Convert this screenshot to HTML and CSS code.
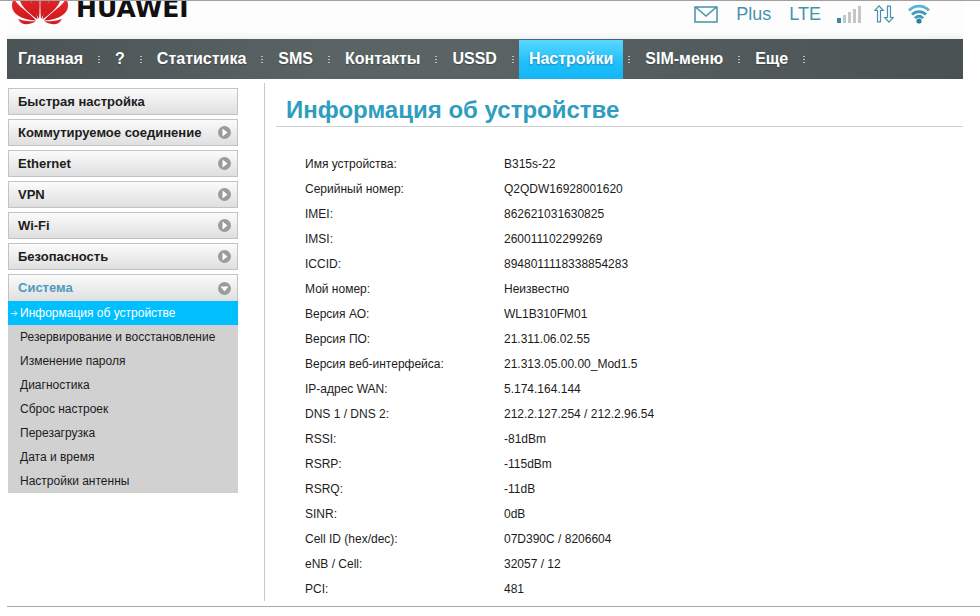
FILE: index.html
```html
<!DOCTYPE html>
<html lang="ru">
<head>
<meta charset="utf-8">
<title>Информация об устройстве</title>
<link rel="stylesheet" href="styles.css">
</head>
<body>
<div class="page">
  <header class="header">
    <a class="brand" href="#">
      <svg class="brand-mark" width="56" height="24" viewBox="0 0 56 24" aria-hidden="true">
        <defs>
          <linearGradient id="petal" x1="0" y1="0" x2="0" y2="1">
            <stop offset="0" stop-color="#ee2a2a"/><stop offset="1" stop-color="#c9181e"/>
          </linearGradient>
        </defs>
        <g id="half" fill="url(#petal)">
          <path d="M27 18C23 11 18 3 19-5c1-5 5-8 7-8 2 9 2 20 1 31z"/>
          <path d="M25.500 18.500C18 13 9 6 7.500-2L13-10C18-2 25 10 25.500 18.500z"/>
          <path d="M24 19.500C13 19 3 15 .5 8c-1-4-.5-7 1.500-10.500C5 5 17 11 24 19.500z"/>
          <path d="M24 20.500C19 23 15 23.500 12 23c-3-.5-5-3-6-5 6 1.800 12 2.500 18 2.500z"/>
        </g>
        <use href="#half" transform="matrix(-1 0 0 1 56 0)"/>
      </svg>
      <span class="brand-name">HUAWEI</span>
    </a>
    <div class="status">
      <svg class="icon-mail" width="24" height="17" viewBox="0 0 24 17" fill="none" stroke="#4593ac" stroke-width="1.500" aria-hidden="true">
        <path d="M1 1h22v15H1zM2 1.500l10 8.500L22 1.500"/>
      </svg>
      <span class="operator">Plus</span>
      <span class="network">LTE</span>
      <svg class="icon-signal" width="25" height="18" viewBox="0 0 25 18" aria-hidden="true">
        <path fill="#3f87a3" d="M0 13h4v5H0z"/>
        <path fill="#b5cbd4" d="M6 10h3v8H6z"/>
        <path fill="#c6c6c6" d="M11 7h3v11h-3zM16 4h3v14h-3zM21 1h3v17h-3z"/>
      </svg>
      <svg class="icon-traffic" width="20" height="18" viewBox="0 0 20 18" fill="none" stroke="#4593ac" stroke-width="1.200" aria-hidden="true">
        <path d="M5 .8L.8 5.500h2.700v11.300h3V5.500h2.700zM15 17.200l4.200-4.700h-2.700V1.200h-3v11.300h-2.700z"/>
      </svg>
      <svg class="icon-wifi" width="22" height="20" viewBox="0 0 22 20" fill="none" stroke="#3f9abd" stroke-width="2.800" aria-hidden="true">
        <path stroke="#57b4d4" d="M1 6.500C6.500.6 15.500.6 21 6.500"/>
        <path d="M4 10.600c4-4 10-4 14 0M7 14.200c2.500-2.400 5.500-2.400 8 0"/>
        <circle cx="11" cy="17" r="2.600" fill="#347f9d" stroke="none"/>
      </svg>
    </div>
  </header>

  <nav class="nav">
    <ul class="nav-list">
      <li><a href="#">Главная</a></li>
      <li><a href="#">?</a></li>
      <li><a href="#">Статистика</a></li>
      <li><a href="#">SMS</a></li>
      <li><a href="#">Контакты</a></li>
      <li><a href="#">USSD</a></li>
      <li><a class="active" href="#">Настройки</a></li>
      <li><a href="#">SIM-меню</a></li>
      <li><a href="#">Еще</a></li>
    </ul>
  </nav>

  <div class="body">
    <aside class="sidebar">
      <a class="menu" href="#">Быстрая настройка</a>
      <a class="menu" href="#">Коммутируемое соединение
        <svg class="bullet" viewBox="0 0 13 13" aria-hidden="true"><circle cx="6.500" cy="6.500" r="6.500"/><path d="M4.500 2.500l5 4-5 4z"/></svg></a>
      <a class="menu" href="#">Ethernet
        <svg class="bullet" viewBox="0 0 13 13" aria-hidden="true"><circle cx="6.500" cy="6.500" r="6.500"/><path d="M4.500 2.500l5 4-5 4z"/></svg></a>
      <a class="menu" href="#">VPN
        <svg class="bullet" viewBox="0 0 13 13" aria-hidden="true"><circle cx="6.500" cy="6.500" r="6.500"/><path d="M4.500 2.500l5 4-5 4z"/></svg></a>
      <a class="menu" href="#">Wi-Fi
        <svg class="bullet" viewBox="0 0 13 13" aria-hidden="true"><circle cx="6.500" cy="6.500" r="6.500"/><path d="M4.500 2.500l5 4-5 4z"/></svg></a>
      <a class="menu" href="#">Безопасность
        <svg class="bullet" viewBox="0 0 13 13" aria-hidden="true"><circle cx="6.500" cy="6.500" r="6.500"/><path d="M4.500 2.500l5 4-5 4z"/></svg></a>
      <div class="group">
        <a class="menu open" href="#">Система
          <svg class="bullet" viewBox="0 0 13 13" aria-hidden="true"><circle cx="6.500" cy="6.500" r="6.500"/><path d="M2.500 4.500h8l-4 5z"/></svg></a>
        <ul class="submenu">
          <li><a class="current" href="#"><svg class="arrow" viewBox="0 0 7 7" aria-hidden="true"><path d="M0 3.500h6M3.500 1L6 3.500 3.500 6"/></svg>Информация об устройстве</a></li>
          <li><a href="#">Резервирование и восстановление</a></li>
          <li><a href="#">Изменение пароля</a></li>
          <li><a href="#">Диагностика</a></li>
          <li><a href="#">Сброс настроек</a></li>
          <li><a href="#">Перезагрузка</a></li>
          <li><a href="#">Дата и время</a></li>
          <li><a href="#">Настройки антенны</a></li>
        </ul>
      </div>
    </aside>

    <main class="content">
      <h1>Информация об устройстве</h1>
      <table class="info">
        <tbody>
          <tr><th scope="row">Имя устройства:</th><td>B315s-22</td></tr>
          <tr><th scope="row">Серийный номер:</th><td>Q2QDW16928001620</td></tr>
          <tr><th scope="row">IMEI:</th><td>862621031630825</td></tr>
          <tr><th scope="row">IMSI:</th><td>260011102299269</td></tr>
          <tr><th scope="row">ICCID:</th><td>8948011118338854283</td></tr>
          <tr><th scope="row">Мой номер:</th><td>Неизвестно</td></tr>
          <tr><th scope="row">Версия АО:</th><td>WL1B310FM01</td></tr>
          <tr><th scope="row">Версия ПО:</th><td>21.311.06.02.55</td></tr>
          <tr><th scope="row">Версия веб-интерфейса:</th><td>21.313.05.00.00_Mod1.5</td></tr>
          <tr><th scope="row">IP-адрес WAN:</th><td>5.174.164.144</td></tr>
          <tr><th scope="row">DNS 1 / DNS 2:</th><td>212.2.127.254 / 212.2.96.54</td></tr>
          <tr><th scope="row">RSSI:</th><td>-81dBm</td></tr>
          <tr><th scope="row">RSRP:</th><td>-115dBm</td></tr>
          <tr><th scope="row">RSRQ:</th><td>-11dB</td></tr>
          <tr><th scope="row">SINR:</th><td>0dB</td></tr>
          <tr><th scope="row">Cell ID (hex/dec):</th><td>07D390C / 8206604</td></tr>
          <tr><th scope="row">eNB / Cell:</th><td>32057 / 12</td></tr>
          <tr><th scope="row">PCI:</th><td>481</td></tr>
        </tbody>
      </table>
    </main>
  </div>
  <hr class="rule">
</div>
</body>
</html>
```
FILE: styles.css
```css
* {
  box-sizing: border-box;
}

body {
  margin: 0;
  background: #fff;
  border-top: 1px solid #a0a0a0;
  color: #1c1c1c;
  font: 12px/16px "Liberation Sans", Arial, sans-serif;
}

a {
  color: inherit;
  text-decoration: none;
}

ul {
  list-style: none;
  margin: 0;
  padding: 0;
}

.page {
  padding-left: 7px;
}

.header,
.nav,
.body {
  margin-right: 17px;
}

/* Header */
.header {
  display: flex;
  justify-content: space-between;
  align-items: flex-start;
  height: 38px;
  background: linear-gradient(#fdfdfd 80%, #f1f3f3);
}

.brand {
  display: flex;
  align-items: flex-start;
  padding-left: 5px;
  gap: 8px;
}

.brand-mark {
  flex: none;
}

.brand-name {
  color: #111;
  font: bold 25px/16px "DejaVu Sans", sans-serif;
}

.status {
  display: flex;
  align-items: center;
  height: 26px;
  padding-right: 33px;
  color: #4593ac;
  font-size: 18px;
}

.operator {
  margin-left: 18px;
}

.network {
  margin-left: 18px;
}

.icon-signal {
  margin-left: 16px;
}

.icon-traffic {
  margin-left: 12px;
}

.icon-wifi {
  margin-left: 14px;
}

/* Main navigation */
.nav {
  background: linear-gradient(90deg, #4b5355, #5a6465 35%, #5a6465 50%, #4a5153);
}

.nav-list {
  display: flex;
  height: 40px;
  padding-left: 1px;
  color: #fff;
  font-size: 16px;
  font-weight: bold;
}

.nav-list li {
  display: flex;
  align-items: center;
}

.nav-list li::after {
  content: "";
  width: 2px;
  height: 8px;
  margin: 2px 5px 0;
  background: repeating-linear-gradient(#b9bfc0 0 1px, transparent 1px 3px);
}

.nav-list a {
  height: 100%;
  padding: 0 10px;
  line-height: 39px;
  text-shadow: 0 1px 1px #3c4446;
}

.nav-list .active {
  margin-top: 1px;
  height: 39px;
  line-height: 37px;
  background: linear-gradient(#59d8ff, #21c0fb 55%, #12b5f5);
  text-shadow: 0 1px 2px #1584b4;
}

/* Columns */
.body {
  display: flex;
  align-items: stretch;
  padding-top: 4px;
}

.sidebar {
  display: flex;
  flex-direction: column;
  gap: 4px;
  flex: none;
  width: 258px;
  padding: 5px 26px 0 1px;
  border-right: 1px solid #c8c8c8;
}

.menu {
  display: flex;
  align-items: center;
  justify-content: space-between;
  height: 27px;
  padding: 0 6px 0 9px;
  border: 1px solid #c3c3c3;
  background: linear-gradient(#fbfbfb, #dfdfdf);
  font-size: 13px;
  font-weight: bold;
}

.menu.open {
  border-bottom: 0;
  color: #4b9cbd;
}

.bullet {
  width: 13px;
  height: 13px;
}

.bullet circle {
  fill: #9b9b9b;
}

.bullet path {
  fill: #fff;
}

.submenu {
  background: #d1d1d1;
}

.submenu a {
  display: flex;
  align-items: center;
  height: 24px;
  padding-left: 12px;
}

.submenu .current {
  padding-left: 3px;
  gap: 2px;
  background: #00bfff;
  color: #fff;
}

.arrow {
  width: 7px;
  height: 7px;
  fill: none;
  stroke: #d8f5ff;
}

.content {
  flex: 1;
  min-width: 0;
  padding: 11px 0 0 11px;
}

h1 {
  margin: 0 0 24px;
  padding: 0 0 1px 10px;
  border-bottom: 1px solid #cfcfcf;
  color: #2f9dbf;
  font-size: 24px;
  line-height: 31px;
}

.info {
  width: 100%;
  margin-left: 29px;
  border-collapse: collapse;
}

.info th,
.info td {
  height: 25px;
  padding: 0;
  text-align: left;
  font-weight: normal;
}

.info th {
  width: 199px;
}

.rule {
  height: 1px;
  margin: 5px 0 0;
  border: 0;
  background: #a8a8a8;
}
```
